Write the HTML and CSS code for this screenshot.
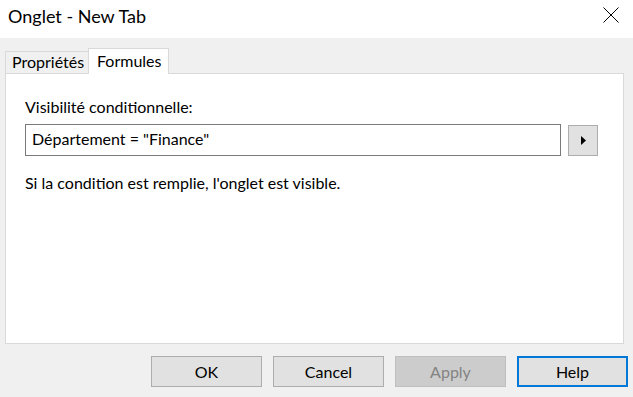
FILE: index.html
```html
<!DOCTYPE html>
<html lang="fr">
<head>
    <meta charset="UTF-8">
    <meta name="viewport" content="width=device-width, initial-scale=1.0">
    <title>Onglet - New Tab</title>
    <link rel="stylesheet" href="styles.css">
</head>
<body>
    <div class="window">
        <div class="titlebar">
            <span class="title">Onglet - New Tab</span>
            <svg class="close-icon" width="16" height="16" viewBox="0 0 16 16">
                <path d="M0.5 0.5 L15.5 15.5 M15.5 0.5 L0.5 15.5" stroke="#000" stroke-width="1" fill="none"/>
            </svg>
        </div>

        <div class="content">
            <div class="tabs">
                <div class="tab tab-props">Propriétés</div>
                <div class="tab tab-active">Formules</div>
            </div>

            <div class="panel">
                <div class="field-label">Visibilité conditionnelle:</div>
                <div class="formula-row">
                    <div class="formula-input">Département = "Finance"</div>
                    <button class="arrow-btn" type="button">
                        <svg width="5" height="9" viewBox="0 0 5 9">
                            <polygon points="0,0 5,4.5 0,9" fill="#000"/>
                        </svg>
                    </button>
                </div>
                <p class="hint">Si la condition est remplie, l'onglet est visible.</p>
            </div>

            <div class="button-group">
                <button class="btn" type="button">OK</button>
                <button class="btn" type="button">Cancel</button>
                <button class="btn btn-disabled" type="button" disabled>Apply</button>
                <button class="btn btn-default" type="button">Help</button>
            </div>
        </div>
    </div>
</body>
</html>
```

FILE: styles.css
```css
body {
    margin: 0;
    font-family: Lato, "Liberation Sans", sans-serif;
    font-size: 16px;
    color: #000;
    background-color: #f0f0f0;
}

.window {
    width: 633px;
    height: 397px;
    overflow: hidden;
}

.titlebar {
    height: 38px;
    background: white;
    display: flex;
    justify-content: space-between;
    align-items: flex-start;
    padding: 5px 14px 0 8px;
    box-sizing: border-box;
}

.title {
    font-size: 18px;
    line-height: 22px;
}

.close-icon {
    margin-top: 2px;
}

.content {
    padding: 10px 0 0 5px;
}

.tabs {
    display: flex;
    align-items: flex-end;
    height: 25px;
}

.tab {
    box-sizing: border-box;
    border: 1px solid #d9d9d9;
    border-bottom: none;
    line-height: 20px;
}

.tab-props {
    width: 84px;
    height: 22px;
    padding-left: 6px;
    background: #f0f0f0;
}

.tab-active {
    position: relative;
    width: 81px;
    height: 26px;
    margin-left: -1px;
    margin-bottom: -1px;
    padding: 2px 0 0 8px;
    background: white;
}

.panel {
    box-sizing: border-box;
    width: 619px;
    height: 271px;
    border: 1px solid #d9d9d9;
    background: white;
    padding: 23px 0 0 19px;
}

.field-label {
    line-height: 20px;
}

.formula-row {
    display: flex;
    align-items: flex-start;
    gap: 7px;
    margin-top: 7px;
}

.formula-input {
    box-sizing: border-box;
    width: 536px;
    height: 32px;
    border: 1px solid #7a7a7a;
    padding: 4px 0 0 6px;
    line-height: 20px;
}

.arrow-btn {
    box-sizing: border-box;
    width: 30px;
    height: 31px;
    margin-top: 1px;
    padding: 0 0 0 1px;
    border: 1px solid #adadad;
    background: #e1e1e1;
    display: flex;
    align-items: center;
    justify-content: center;
}

.hint {
    margin: 17px 0 0;
    line-height: 20px;
}

.button-group {
    display: flex;
    justify-content: flex-end;
    gap: 11px;
    margin-top: 12px;
    padding-right: 5px;
}

.btn {
    box-sizing: border-box;
    width: 111px;
    height: 31px;
    border: 1px solid #adadad;
    background: #e1e1e1;
    font-family: inherit;
    font-size: 16px;
    color: #000;
    padding: 0;
}

.btn-disabled {
    background: #cccccc;
    border-color: #bfbfbf;
    color: #838383;
}

.btn-default {
    border: 2px solid #0078d7;
}
```
